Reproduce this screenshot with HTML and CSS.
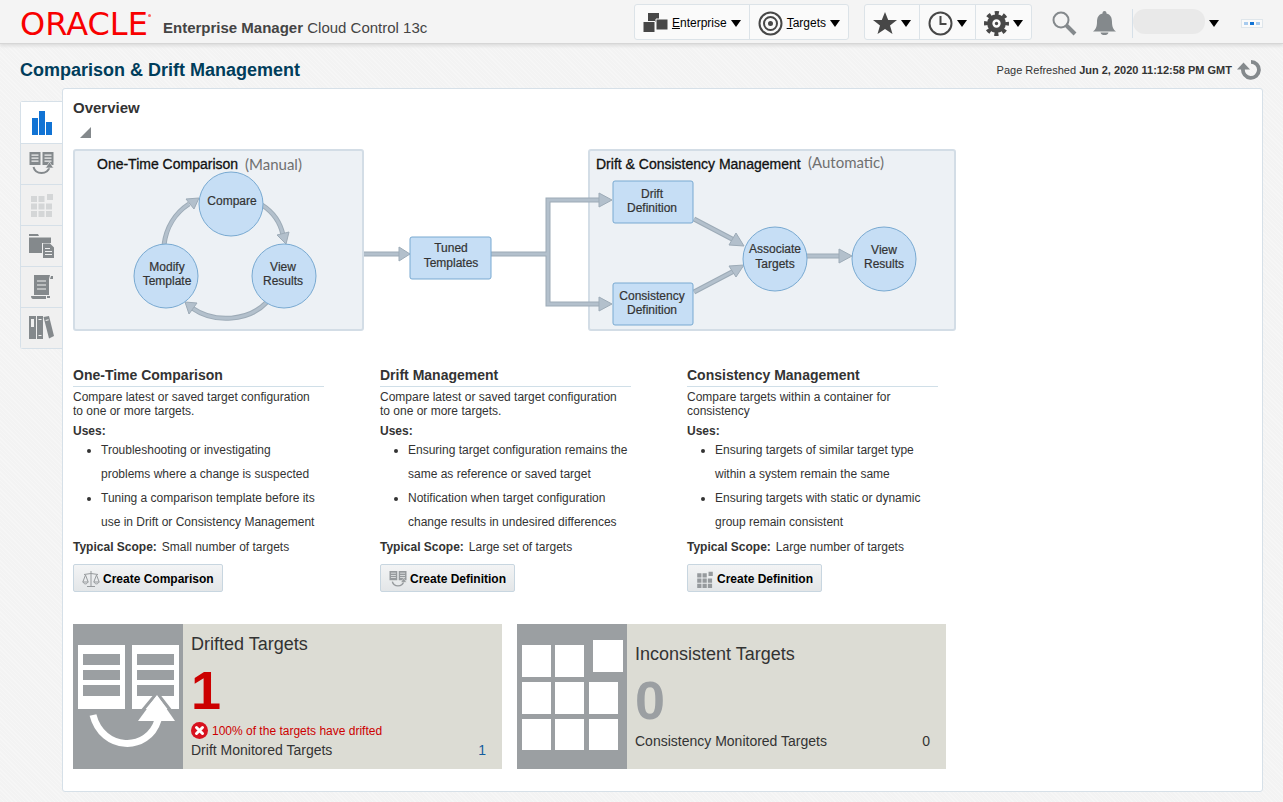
FILE: index.html
```html
<!DOCTYPE html>
<html lang="en">
<head>
<meta charset="utf-8">
<title>Comparison &amp; Drift Management</title>
<link rel="stylesheet" href="styles.css">
</head>
<body>
<svg class="defs" width="0" height="0" aria-hidden="true">
  <defs>
    <symbol id="drift" viewBox="0 0 24 24">
      <path fill-rule="evenodd" d="M0 0h11v13H0zM2 2.500v1.200h7v-1.200zM2 5.500v1.200h7v-1.200zM2 8.500v1.200h7v-1.200zM13 0h11v13H13zM15 2.500v1.200h7v-1.200zM15 5.500v1.200h7v-1.200zM15 8.500v1.200h7v-1.200z"/>
      <path d="M4 15c2 8 14 8 16 0" fill="none" stroke="currentColor" stroke-width="2"/>
      <path d="M20 10l4 6h-8z" stroke="#f0f0f0" stroke-width=".6"/>
    </symbol>
    <symbol id="grid" viewBox="0 0 24 24">
      <path d="M1 3h6v6H1zM8.500 3h6v6h-6zM17 1h6v6h-6zM1 10.500h6v6H1zM8.500 10.500h6v6h-6zM16 10.500h6v6h-6zM1 18h6v6H1zM8.500 18h6v6h-6zM16 18h6v6h-6z"/>
    </symbol>
  </defs>
</svg>

<header class="topbar">
  <div class="brand">
    <span class="logo">ORACLE<span class="logo-mark"></span></span>
    <span class="product"><b>Enterprise Manager</b> Cloud Control 13c</span>
  </div>
  <nav class="menus">
    <div class="menu-group">
      <button class="menu" type="button">
        <svg width="25" height="22" viewBox="0 0 25 22" fill="#474747"><path d="M5 1h11v9H5z"/><path d="M13 7h12v11H13z" stroke="#fafafa"/><path d="M0 9.500h12v11H0z" stroke="#fafafa"/></svg>
        <span><u>E</u>nterprise</span><i class="caret"></i>
      </button>
      <button class="menu" type="button">
        <svg width="25" height="25" viewBox="0 0 25 25" fill="none" stroke="#474747" stroke-width="2"><circle cx="12.500" cy="12.500" r="11"/><circle cx="12.500" cy="12.500" r="6.500"/><circle cx="12.500" cy="12.500" r="1.500" fill="#474747"/></svg>
        <span><u>T</u>argets</span><i class="caret"></i>
      </button>
    </div>
    <div class="menu-group">
      <button class="menu" type="button" aria-label="Favorites">
        <svg width="24" height="24" viewBox="0 0 24 24"><path d="M12 1l3.200 8H24l-7 5.500 2.500 8.500-7.500-5-7.500 5L7 14.500 0 9h8.800z" fill="#474747"/></svg><i class="caret"></i>
      </button>
      <button class="menu" type="button" aria-label="History">
        <svg width="25" height="25" viewBox="0 0 25 25" fill="none" stroke="#474747" stroke-width="2"><circle cx="12.500" cy="12.500" r="11"/><path d="M12.500 5v8h6"/></svg><i class="caret"></i>
      </button>
      <button class="menu" type="button" aria-label="Setup">
        <svg width="25" height="25" viewBox="0 0 24 24"><g fill="none" stroke="#474747"><circle cx="12" cy="12" r="6.500" stroke-width="5"/><circle cx="12" cy="12" r="10" stroke-width="4" stroke-dasharray="3.900 3.954" stroke-dashoffset="1.950"/></g><circle cx="12" cy="12" r="1.600" fill="#474747"/></svg><i class="caret"></i>
      </button>
    </div>
  </nav>
  <div class="tools">
    <button class="tool" type="button" aria-label="Search"><svg width="25" height="25" viewBox="0 0 25 25" fill="none" stroke="#84898c"><circle cx="9" cy="9" r="7.500" stroke-width="2"/><path d="M14 14l9 9" stroke-width="4"/></svg></button>
    <button class="tool" type="button" aria-label="Notifications"><svg width="23" height="25" viewBox="0 0 23 25" fill="#84898c"><path d="M11.500 0c1.500 0 2 1 2 2.500 4 1 5.500 4 5.500 8.500 0 5 1.500 7.500 4 9.500H0c2.500-2 4-4.500 4-9.500 0-4.500 1.500-7.500 5.500-8.500C9.500 1 10 0 11.500 0zM7.500 21.500h8c-.5 2-2 2.500-4 2.500s-3.500-.5-4-2.500z"/></svg></button>
    <button class="user" type="button" aria-label="User menu"><span class="user-name"></span><i class="caret"></i></button>
    <span class="activity"><i></i><i></i><i></i></span>
  </div>
</header>

<div class="titlebar">
  <h1>Comparison &amp; Drift Management</h1>
  <div class="refreshed">
    <span>Page Refreshed <b>Jun 2, 2020 11:12:58 PM GMT</b></span>
    <button class="tool" type="button" aria-label="Refresh"><svg width="24" height="22" viewBox="0 0 24 22"><path d="M14 2.800a8 8 0 1 1-8 7" fill="none" stroke="#84898c" stroke-width="3.800"/><path d="M0 10.500L6.500 3.500l6.500 7z" fill="#84898c"/></svg></button>
  </div>
</div>

<div class="workspace">
  <nav class="tabs">
    <button class="tab active" type="button" aria-label="Overview"><svg width="22" height="26" viewBox="0 0 22 26" fill="#1173d4"><path d="M1 8h6v17H1zM8 1h6v24H8zM15 12h6v13h-6z"/></svg></button>
    <button class="tab" type="button" aria-label="Drift"><svg width="25" height="24"><use href="#drift"/></svg></button>
    <button class="tab disabled" type="button" aria-label="Consistency"><svg width="24" height="24"><use href="#grid"/></svg></button>
    <button class="tab" type="button" aria-label="Saved comparisons"><svg width="25" height="25" viewBox="0 0 25 25"><path d="M0 0h9l1 2H0zM0 3.500h22V9h-9v10H0z"/><path fill-rule="evenodd" d="M14 9.500h7l4 4V24H14zM16 14v1h5v-1zM16 17v1h7v-1zM16 20v1h7v-1z"/></svg></button>
    <button class="tab" type="button" aria-label="Templates"><svg width="24" height="25" viewBox="0 0 24 25"><path fill-rule="evenodd" d="M4 0h16l-1 4v16H4zM7 5.500v1h9v-1zM7 9.500v1h9v-1zM7 13.500v1h9v-1z"/><path d="M21 1h2v3h-3zM1 21h15v3H3c-1 0-2-1-2-3zM17 21h3v2h-3z"/></svg></button>
    <button class="tab" type="button" aria-label="Library"><svg width="25" height="24" viewBox="0 0 25 24"><path fill-rule="evenodd" d="M0 0h7v23H0zM2 3v8h3V3zM8 0h6v23H8zM9.500 3v1h3V3zM14.500 1l5.500-1 5 20-5 2.500zM16.500 4l.3 1 3-.8-.3-1zM9.500 19v1h3v-1z"/></svg></button>
  </nav>

  <main class="panel">
    <h2>Overview</h2>
    <button class="disclosure" type="button" aria-label="Collapse"><svg width="12" height="12" viewBox="0 0 12 12"><path d="M12 1v11H1z" fill="#84898c"/></svg></button>

    <svg class="diagram" width="884" height="183" viewBox="0 0 884 183">
      <g class="zone"><rect x="1" y="1" width="289" height="180" rx="2"/><rect x="516" y="1" width="366" height="180" rx="2"/></g>
      <g class="wire-edge">
        <path d="M91 96c2-17 11-32 25-41"/><path d="M189 56c11 7 18 16 21 30"/><path d="M194 153c-18 19-52 22-75 6"/>
        <path d="M291 105h37"/><path d="M418 105h57M528 51h-53v104h53"/>
        <path d="M621 70l40 21M621 143l40-21"/><path d="M734 107h32"/>
      </g>
      <g class="wire">
        <path d="M91 96c2-17 11-32 25-41"/><path d="M189 56c11 7 18 16 21 30"/><path d="M194 153c-18 19-52 22-75 6"/>
        <path d="M291 105h37"/><path d="M418 105h57M528 51h-53v104h53"/>
        <path d="M621 70l40 21M621 143l40-21"/><path d="M734 107h32"/>
      </g>
      <path class="heads" d="M126 49l-13 1 8 10zM213 95l-9-9 12-3zM112 153l12 1-8 11zM337 105l-11-7v14zM539 51l-13-7v14zM539 155l-13-7v14zM671 97l-15-1 7-12zM671 116l-15 1 7 11zM779 107l-13-7v14z"/>
      <g class="node">
        <circle cx="158" cy="55" r="32"/><circle cx="93" cy="127" r="32"/><circle cx="211" cy="127" r="32"/>
        <circle cx="702" cy="110" r="32"/><circle cx="811" cy="110" r="32"/>
        <rect x="337" y="88" width="81" height="42" rx="2"/><rect x="540" y="32" width="80" height="42" rx="2"/><rect x="540" y="134" width="80" height="42" rx="2"/>
      </g>
      <text class="zone-title" x="24" y="20">One-Time Comparison</text><text class="zone-mode" x="172" y="21">(Manual)</text>
      <text class="zone-title" x="523" y="20">Drift &amp; Consistency Management</text><text class="zone-mode" x="735" y="19">(Automatic)</text>
      <g class="label">
        <text x="159" y="56">Compare</text>
        <text x="94" y="122">Modify</text><text x="94" y="136">Template</text>
        <text x="210" y="122">View</text><text x="210" y="136">Results</text>
        <text x="378" y="103">Tuned</text><text x="378" y="118">Templates</text>
        <text x="579" y="49">Drift</text><text x="579" y="63">Definition</text>
        <text x="579" y="151">Consistency</text><text x="579" y="165">Definition</text>
        <text x="702" y="104">Associate</text><text x="702" y="119">Targets</text>
        <text x="811" y="105">View</text><text x="811" y="119">Results</text>
      </g>
    </svg>

    <div class="columns">
      <section class="column">
        <h3>One-Time Comparison</h3>
        <p class="summary">Compare latest or saved target configuration to one or more targets.</p>
        <h4>Uses:</h4>
        <ul>
          <li>Troubleshooting or investigating problems where a change is suspected</li>
          <li>Tuning a comparison template before its use in Drift or Consistency Management</li>
        </ul>
        <p class="scope"><b>Typical Scope:</b> <span>Small number of targets</span></p>
        <button class="action" type="button"><svg width="18" height="17" viewBox="0 0 18 17" fill="none" stroke="#969a9d"><path d="M9 0v15M2 3.500l7-1 7 1M5 15.500h8"/><path d="M3.500 4L.8 11h5.400zM14.500 4l-2.700 7h5.400zM1 11c1 2.500 4 2.500 5 0M12 11c1 2.500 4 2.500 5 0"/></svg>Create Comparison</button>
      </section>
      <section class="column">
        <h3>Drift Management</h3>
        <p class="summary">Compare latest or saved target configuration to one or more targets.</p>
        <h4>Uses:</h4>
        <ul>
          <li>Ensuring target configuration remains the same as reference or saved target</li>
          <li>Notification when target configuration change results in undesired differences</li>
        </ul>
        <p class="scope"><b>Typical Scope:</b> <span>Large set of targets</span></p>
        <button class="action" type="button"><svg width="18" height="17"><use href="#drift"/></svg>Create Definition</button>
      </section>
      <section class="column">
        <h3>Consistency Management</h3>
        <p class="summary">Compare targets within a container for consistency</p>
        <h4>Uses:</h4>
        <ul>
          <li>Ensuring targets of similar target type within a system remain the same</li>
          <li>Ensuring targets with static or dynamic group remain consistent</li>
        </ul>
        <p class="scope"><b>Typical Scope:</b> <span>Large number of targets</span></p>
        <button class="action" type="button"><svg width="18" height="17"><use href="#grid"/></svg>Create Definition</button>
      </section>
    </div>

    <div class="tiles">
      <section class="tile">
        <svg class="tile-icon" width="110" height="145" viewBox="0 0 110 145">
          <path fill="#fff" fill-rule="evenodd" d="M5 21h47v64H5zM10 30v11h37V30zM10 46v10h37V46zM10 61v11h37V61zM59 21h47v64H59zM64 30v11h37V30zM64 46v10h37V46zM64 61v11h37V61z"/>
          <path d="M20 91c9 36 55 38 65 5" fill="none" stroke="#fff" stroke-width="7"/>
          <path d="M69 87l15-18 14 18" fill="none" stroke="#9b9fa2" stroke-width="3"/><path d="M84 71l18 26H65z" fill="#fff"/>
        </svg>
        <div class="tile-body">
          <h3>Drifted Targets</h3>
          <strong class="count bad">1</strong>
          <p class="alert"><svg width="17" height="17" viewBox="0 0 17 17"><circle cx="8.500" cy="8.500" r="8.500" fill="#d8121f"/><path d="M5.500 5.500l6 6M11.500 5.500l-6 6" stroke="#fff" stroke-width="3" stroke-linecap="round"/></svg>100% of the targets have drifted</p>
          <p class="monitored"><span>Drift Monitored Targets</span><a href="#">1</a></p>
        </div>
      </section>
      <section class="tile">
        <svg class="tile-icon" width="110" height="145" viewBox="0 0 110 145"><path fill="#fff" d="M5 21h29v32H5zM38 21h29v32H38zM76 16h30v32H76zM5 58h29v32H5zM38 58h29v32H38zM72 58h29v32H72zM5 95h29v31H5zM38 95h29v31H38zM72 95h29v31H72z"/></svg>
        <div class="tile-body">
          <h3>Inconsistent Targets</h3>
          <strong class="count">0</strong>
          <p class="monitored"><span>Consistency Monitored Targets</span><span>0</span></p>
        </div>
      </section>
    </div>
  </main>
</div>
</body>
</html>
```
FILE: styles.css
```css
* { box-sizing: border-box; }
body {
  margin: 0;
  color: #333;
  font: 12px/14px "Liberation Sans", Arial, sans-serif;
  background: repeating-linear-gradient(45deg, #f6f6f6 0 1px, #f3f3f3 1px 3px);
}
h1, h2, h3, h4, p, ul { margin: 0; }
button { font: inherit; color: #000; padding: 0; border: 0; background: none; }
svg { display: block; flex: none; }
.defs { position: absolute; }

.topbar {
  display: flex;
  align-items: flex-start;
  height: 44px;
  padding: 4px 20px 0;
  background: #f4f4f4;
  border-bottom: 1px solid #d6d6d6;
  box-shadow: 0 2px 3px #ddd;
}
.brand { display: flex; flex: 1; height: 40px; align-items: center; }
.logo {
  display: flex;
  width: 143px;
  color: #f80000;
  font: 32px/40px "DejaVu Sans", sans-serif;
}
.logo-mark { width: 3px; height: 3px; margin-top: 10px; border-radius: 50%; background: #f66; }
.product { padding-top: 8px; font-size: 15px; line-height: 18px; white-space: nowrap; color: #444; }
.menus { display: flex; gap: 15px; }
.menu-group {
  display: flex;
  height: 36px;
  border: 1px solid #dce3e8;
  border-radius: 3px;
  background: #fafafa;
}
.menu { display: flex; align-items: center; gap: 4px; padding: 2px 8px 0; }
.menu + .menu { border-left: 1px solid #dce3e8; }
.caret { border: 5px solid transparent; border-top: 7px solid #000; border-bottom: 0; }
.tools { display: flex; align-items: center; height: 38px; margin-left: 20px; gap: 16px; }
.user { display: flex; align-items: center; gap: 4px; border-left: 1px solid #d6e0e8; }
.user-name { width: 72px; height: 25px; margin-bottom: 4px; border-radius: 12px; background: #e9e9e9; }
.activity { display: flex; gap: 2px; padding: 2px; margin-left: 6px; border: 1px solid #dfe6eb; background: #fafafa; }
.activity i { width: 4px; height: 3px; background: #a8cbee; }
.activity i:nth-child(2) { background: #1173d4; }

.titlebar {
  display: flex;
  align-items: center;
  justify-content: space-between;
  height: 44px;
  padding: 8px 22px 0 20px;
}
h1 { font-size: 18px; line-height: 24px; color: #003d5b; }
.refreshed { display: flex; align-items: center; gap: 5px; font-size: 11px; }

.workspace { display: flex; align-items: flex-start; padding: 0 20px 11px; }
.tabs { display: flex; flex-direction: column; width: 42px; margin-top: 13px; border: 1px solid #d6e0e8; border-right: 0; border-radius: 3px 0 0 3px; }
.tab {
  display: flex;
  align-items: center;
  justify-content: center;
  height: 41px;
  background: #f0f0f0;
  color: #84898c;
  fill: #84898c;
}
.tab + .tab { border-top: 1px solid #d6e0e8; }
.tab.active { background: #fff; }
.tab.disabled { fill: #d4d6d7; }
.panel {
  flex: 1;
  min-width: 0;
  padding: 9px 10px 22px;
  background: #fff;
  border: 1px solid #d6e0e8;
  border-radius: 3px;
}
h2 { font-size: 15px; line-height: 20px; }
.disclosure { display: block; padding: 8px 6px 11px; }

.zone rect { fill: #edf1f5; stroke: #d3dde6; stroke-width: 2; }
.wire-edge { fill: none; stroke: #9dabb7; stroke-width: 5; }
.wire { fill: none; stroke: #b3c0cc; stroke-width: 3; }
.heads { fill: #b3c0cc; stroke: #9dabb7; }
.node { fill: #c6def5; stroke: #78a9d1; }
.label { font-size: 12px; text-anchor: middle; fill: #333; stroke: #333; stroke-width: .2; }
.zone-title { font-size: 14px; fill: #111; stroke: #111; stroke-width: .3; }
.zone-mode { font: 15px Lato, sans-serif; fill: #707070; }

.columns { display: flex; gap: 56px; margin-top: 34px; }
.column { width: 251px; }
.column h3 { margin-bottom: 3px; padding-bottom: 2px; font-size: 14px; line-height: 18px; border-bottom: 1px solid #d0dfe8; }
.summary { padding-right: 8px; }
h4 { margin-top: 6px; font-size: 12px; }
ul { padding: 0 3px 0 28px; line-height: 24px; }
.scope { display: flex; gap: 5px; margin: 6px 0 10px; }
.action {
  display: flex;
  align-items: center;
  gap: 3px;
  height: 28px;
  padding: 2px 8px 0;
  font-weight: bold;
  border: 1px solid #c8d6e0;
  border-radius: 2px;
  background: linear-gradient(#f3f4f5, #e3e6e8);
  fill: #969a9d;
}
.action svg { color: #969a9d; }

.tiles { display: flex; gap: 15px; margin-top: 32px; }
.tile { display: flex; width: 429px; background: #dcdcd4; }
.tile-icon { background: #9b9fa2; }
.tile-body { display: flex; flex: 1; flex-direction: column; justify-content: center; padding: 0 16px 2px 8px; }
.tile-body h3 { font-size: 18px; font-weight: normal; line-height: 24px; }
.count { margin: 7px 0 5px; font-size: 54px; line-height: 54px; color: #9b9fa2; }
.count.bad { color: #c00; }
.alert { display: flex; align-items: center; gap: 4px; line-height: 18px; color: #c00; }
.monitored { display: flex; justify-content: space-between; font-size: 14px; line-height: 18px; }
.monitored a { color: #145c9e; text-decoration: none; }
.alert + .monitored { line-height: 20px; }
```
